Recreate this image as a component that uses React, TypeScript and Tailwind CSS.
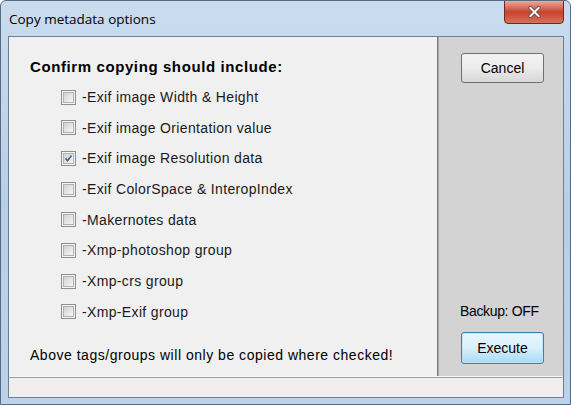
import React from "react";

const items = [
  { label: "-Exif image Width & Height", checked: false },
  { label: "-Exif image Orientation value", checked: false },
  { label: "-Exif image Resolution data", checked: true },
  { label: "-Exif ColorSpace & InteropIndex", checked: false },
  { label: "-Makernotes data", checked: false },
  { label: "-Xmp-photoshop group", checked: false },
  { label: "-Xmp-crs group", checked: false },
  { label: "-Xmp-Exif group", checked: false },
];

function Check({ checked }: { checked: boolean }) {
  return (
    <div className="w-[15px] h-[15px] border border-[#8e8f8f] bg-[#f4f4f4] p-[1px] shrink-0">
      <div className="w-full h-full border border-[#aeb1b5] bg-gradient-to-br from-[#d0d2d5] to-[#f6f6f6] relative">
        {checked && (
          <svg viewBox="0 0 11 11" className="absolute inset-0 w-full h-full">
            <path d="M1.8 5.4 L4.3 8.2 L9.2 1.8" fill="none" stroke="#4b5f8f" strokeWidth="2" />
          </svg>
        )}
      </div>
    </div>
  );
}

export default function App() {
  return (
    <div
      className="w-[571px] h-[405px] flex flex-col overflow-hidden rounded-t-[6px] border border-[#586a80] bg-gradient-to-b from-[#c9dcef] via-[#b8cfe8] to-[#bcd2ea]"
      style={{ fontFamily: '"Liberation Sans", Arial, sans-serif' }}
    >
      <div className="h-[35px] flex items-start relative shrink-0">
        <div
          className="ml-[8px] mt-[9px] text-[13.5px] text-black leading-[18px]"
          style={{ fontFamily: '"Open Sans", "Noto Sans", sans-serif' }}
        >
          Copy metadata options
        </div>
        <div className="absolute left-[503px] top-[-1px] w-[60px] h-[24px] rounded-b-[4px] border border-[#6b2a22] bg-gradient-to-b from-[#eba898] via-[#c7432e] to-[#d8705a] flex items-center justify-center">
          <svg viewBox="0 0 16 14" className="w-[15px] h-[12px]">
            <path d="M3 2 L13 12 M13 2 L3 12" stroke="#3a3a3a" strokeWidth="3.8" strokeLinecap="round" />
            <path d="M3 2 L13 12 M13 2 L3 12" stroke="#ffffff" strokeWidth="2.3" strokeLinecap="round" />
          </svg>
        </div>
      </div>
      <div className="ml-[7px] mr-[6px] h-[362px] border border-[#6e7f94] flex flex-col bg-[#f0f0f0]">
        <div className="flex h-[339px]">
          <div className="w-[428px] bg-[#f0f0f0] flex flex-col pl-[21px]">
            <div className="mt-[21px] text-[15px] font-bold text-black leading-[18px] tracking-[0.6px]">
              Confirm copying should include:
            </div>
            <div className="mt-[13px] ml-[31px] flex flex-col gap-[14.7px]">
              {items.map((it) => (
                <div key={it.label} className="flex items-center gap-[6px] h-[16px]">
                  <Check checked={it.checked} />
                  <span className="text-[14px] text-[#1a1a1a] leading-[16px] tracking-[0.35px]">{it.label}</span>
                </div>
              ))}
            </div>
            <div className="mt-[27px] text-[14px] text-black leading-[16px] tracking-[0.52px]">
              Above tags/groups will only be copied where checked!
            </div>
          </div>
          <div className="w-[1px] bg-[#7a7a7a]" />
          <div className="flex-1 bg-[#d3d3d3] flex flex-col items-start pl-[22px] border-l border-[#a8a8a8]">
            <button className="mt-[16px] w-[83px] h-[30px] rounded-[3px] border border-[#707070] bg-gradient-to-b from-[#f3f3f3] via-[#ebebeb] to-[#d7d7d7] text-[14px] text-black">
              Cancel
            </button>
            <div className="mt-auto ml-[-1px] text-[14px] text-black leading-[16px] tracking-[-0.35px]">Backup: OFF</div>
            <button className="mt-[13px] mb-[12px] w-[83px] h-[32px] rounded-[3px] border border-[#3c7fb1] bg-gradient-to-b from-[#eaf6fd] via-[#d9f0fc] to-[#a7d9f5] shadow-[inset_0_0_0_1px_#bfe7fb] text-[14px] text-black">
              Execute
            </button>
          </div>
        </div>
        <div className="h-[1px] bg-[#f7f7f7]" />
        <div className="h-[1px] bg-[#a0a0a0]" />
        <div className="flex-1 bg-[#f0eeee]" />
      </div>
    </div>
  );
}
